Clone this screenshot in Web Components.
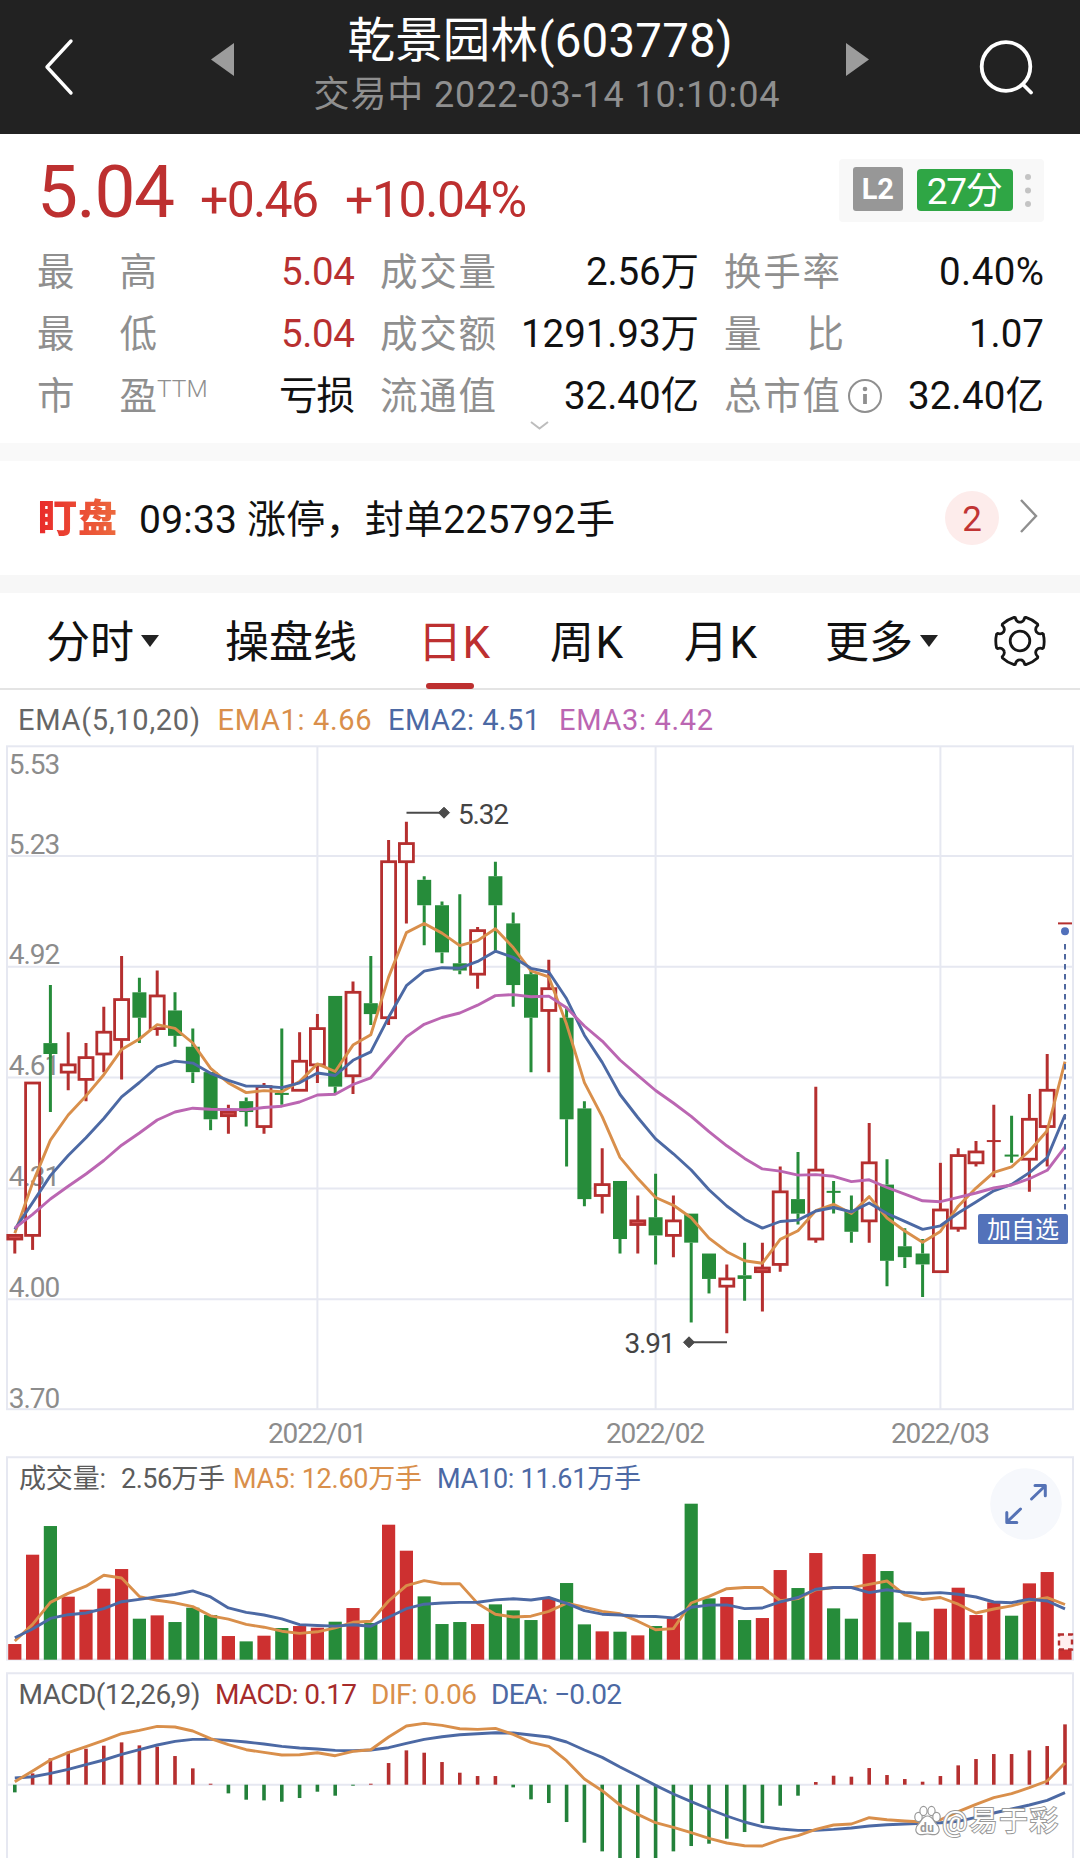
<!DOCTYPE html>
<html lang="zh-CN">
<head>
<meta charset="utf-8">
<title>乾景园林(603778)</title>
<style>
  body {
    margin: 0;
    width: 1080px;
    height: 1858px;
    overflow: hidden;
    background: #fff;
    color: #111;
    font-family: Roboto, "Noto Sans CJK SC", sans-serif;
  }
</style>
</head>
<body>
<stock-page></stock-page>

<script>
const RED = "#b52f2f";
const GREEN = "#268c3a";
const ORANGE = "#d98f4b";
const BLUE = "#4c69a4";
const PINK = "#bb66b2";
const GRID = "#e6e8f1";

// x centre of the i-th trading day
const dayX = i => 14.8 + i * 17.8;

// Text that spreads its letters over a given width
class FitText extends HTMLElement {
  constructor() {
    super();
    this.attachShadow({ mode: "open" });
    this.shadowRoot.innerHTML = `
      <style>
        :host { display: block; white-space: nowrap; flex: none; }
        span { display: inline-block; }
      </style>
      <span><slot></slot></span>
    `;
  }

  connectedCallback() {
    const span = this.shadowRoot.querySelector("span");
    const w = Number(this.getAttribute("w"));
    const chars = [...this.textContent].length;
    const gap = (w - span.getBoundingClientRect().width) / Math.max(chars - 1, 1);
    span.style.letterSpacing = `${gap}px`;
    this.style.width = `${w}px`;
  }
}

class StockHeader extends HTMLElement {
  constructor() {
    super();
    this.attachShadow({ mode: "open" });
    this.shadowRoot.innerHTML = `
      <style>
        :host { display: flex; align-items: center; height: 134px; background: #222; color: #fff; }
        svg { display: block; flex: none; }
        .back { margin-left: 43px; }
        .prev { margin: 0 0 16px 137px; }
        .next { margin: 0 0 16px; }
        .search { margin-left: 110px; }
        .names { width: 612px; display: flex; flex-direction: column; align-items: center; gap: 4px; padding-bottom: 4px; }
        .title { font-size: 47.5px; line-height: 56px; }
        .time { font-size: 36px; line-height: 44px; color: #8f8f8f; margin-left: 13px; }
      </style>
      <svg class="back" width="31" height="58"><path d="M28 3 4 29l24 26" fill="none" stroke="#fff" stroke-width="3.4" stroke-linecap="round" stroke-linejoin="round"/></svg>
      <svg class="prev" width="23" height="33"><path d="M23 0v33L0 16.500z" fill="#9c9c9c"/></svg>
      <div class="names">
        <fit-text class="title" w="385">乾景园林(603778)</fit-text>
        <fit-text class="time" w="466">交易中 2022-03-14 10:10:04</fit-text>
      </div>
      <svg class="next" width="23" height="33"><path d="M0 0v33l23-16.500z" fill="#9c9c9c"/></svg>
      <svg class="search" width="56" height="56"><g fill="none" stroke="#fff" stroke-width="3.8" stroke-linecap="round"><circle cx="27" cy="27.500" r="24.300"/><path d="m44 45.500 8 8"/></g></svg>
    `;
  }
}

class StatCell extends HTMLElement {
  constructor() {
    super();
    this.attachShadow({ mode: "open" });
  }

  connectedCallback() {
    const label = this.getAttribute("label");
    const tone = this.getAttribute("tone");
    const short = label.length === 2;
    this.shadowRoot.innerHTML = `
      <style>
        :host { display: flex; height: 62px; line-height: 60px; font-size: 38.500px; }
        .label { display: flex; justify-content: space-between; color: #8f8f8f; font-size: 37.500px; }
        .value { margin-left: auto; color: ${tone === "up" ? "#b83030" : "#111"}; }
        ::slotted(svg) { margin: 12px 0 0 7px; }
        ::slotted(sup) { font-size: 24.500px; line-height: 46px; color: #8f8f8f; font-weight: 300; vertical-align: baseline; }
      </style>
      <span class="label" style="width:${short ? 120 : 116}px">${[...label].map(c => `<span>${c}</span>`).join("")}</span>
      <slot></slot>
      <fit-text class="value" w="${this.getAttribute("w")}">${this.getAttribute("value")}</fit-text>
    `;
  }
}

class QuotePanel extends HTMLElement {
  constructor() {
    super();
    this.attachShadow({ mode: "open" });
    this.shadowRoot.innerHTML = `
      <style>
        :host { display: block; position: relative; height: 309px; box-sizing: border-box; padding: 22px 36px 0 37px; }
        .top { display: flex; align-items: baseline; height: 85.500px; color: #bd3030; }
        .price { font-size: 73px; line-height: 73px; margin-left: 0; }
        .diff { font-size: 50px; margin-left: 25px; }
        .pct { font-size: 50px; margin-left: 26px; }
        .tools {
          align-self: flex-start;
          margin: 3px 0 0 auto;
          width: 205px;
          height: 63px;
          box-sizing: border-box;
          padding: 8px 12px 0 14px;
          display: flex;
          background: #f8f8f8;
          border-radius: 4px;
          color: #fff;
        }
        .l2 { width: 50px; height: 44px; line-height: 45px; background: #979797; border-radius: 3px; font-size: 29px; font-weight: 700; text-align: center; }
        .score { display: flex; justify-content: center; width: 97px; height: 42px; line-height: 45px; margin: 2px 0 0 14px; background: #2fa645; border-radius: 4px; font-size: 37px; }
        .tools svg { margin: 5px 0 0 11px; }
        .grid { display: grid; grid-template-columns: 318px 319px 320px; column-gap: 25px; }
        .more { position: absolute; left: 529px; top: 286px; }
      </style>
      <div class="top">
        <fit-text class="price" w="138">5.04</fit-text>
        <fit-text class="diff" w="119">+0.46</fit-text>
        <fit-text class="pct" w="182">+10.04%</fit-text>
        <div class="tools">
          <div class="l2">L2</div>
          <div class="score"><fit-text w="76">27分</fit-text></div>
          <svg width="8" height="38" fill="#c4c4c4"><circle cx="4" cy="5" r="3"/><circle cx="4" cy="18.500" r="3"/><circle cx="4" cy="32" r="3"/></svg>
        </div>
      </div>
      <div class="grid">
        <stat-cell label="最高" value="5.04" tone="up" w="74"></stat-cell>
        <stat-cell label="成交量" value="2.56万" w="113"></stat-cell>
        <stat-cell label="换手率" value="0.40%" w="105"></stat-cell>
        <stat-cell label="最低" value="5.04" tone="up" w="74"></stat-cell>
        <stat-cell label="成交额" value="1291.93万" w="178"></stat-cell>
        <stat-cell label="量比" value="1.07" w="75"></stat-cell>
        <stat-cell label="市盈" value="亏损" w="76"><sup>TTM</sup></stat-cell>
        <stat-cell label="流通值" value="32.40亿" w="135"></stat-cell>
        <stat-cell label="总市值" value="32.40亿" w="136">
          <svg width="36" height="36"><circle cx="18" cy="18" r="16" fill="none" stroke="#8f8f8f" stroke-width="2"/><circle cx="18" cy="11" r="2.300" fill="#8f8f8f"/><path d="M18 16v10" stroke="#8f8f8f" stroke-width="3.800"/></svg>
        </stat-cell>
      </div>
      <svg class="more" width="21" height="11"><path d="m2 2 8.500 6.500L19 2" fill="none" stroke="#bdbdbd" stroke-width="2"/></svg>
    `;
  }
}

class AlertBar extends HTMLElement {
  constructor() {
    super();
    this.attachShadow({ mode: "open" });
    this.shadowRoot.innerHTML = `
      <style>
        :host { display: flex; align-items: center; height: 114px; border-top: 18px solid #f9f9f9; border-bottom: 18px solid #f7f7f7; line-height: 114px; }
        .logo { margin: 2px 0 0 38px; font-size: 39px; font-weight: 900; background: linear-gradient(90deg, #e92a2a, #ec6a3e); -webkit-background-clip: text; background-clip: text; color: transparent; }
        .text { margin: 4px 0 0 22px; font-size: 39px; }
        .count { margin-left: auto; width: 54px; height: 54px; line-height: 58px; border-radius: 50%; background: #fdeceb; color: #c13434; font-size: 35px; text-align: center; }
        svg { margin: 0 41px 5px 20px; }
      </style>
      <fit-text class="logo" w="79">盯盘</fit-text>
      <fit-text class="text" w="476">09:33 涨停，封单225792手</fit-text>
      <span class="count">2</span>
      <svg width="20" height="36"><path d="m2 2 15 16L2 34" fill="none" stroke="#8f8f8f" stroke-width="2.400"/></svg>
    `;
  }
}

class PeriodTabs extends HTMLElement {
  constructor() {
    super();
    this.attachShadow({ mode: "open" });
    // gear outline: six wide teeth with round notches between
    const at = (deg, r) => {
      const a = deg * Math.PI / 180;
      return `${(r * Math.cos(a)).toFixed(2)} ${(r * Math.sin(a)).toFixed(2)}`;
    };
    let gear = `M${at(-16, 24.2)}`;
    for (let k = 0; k < 6; k++) {
      const d = k * 60;
      gear += `Q${at(d, 25)} ${at(d + 16, 24.4)}L${at(d + 18.5, 23.8)}Q${at(d + 19, 19.8)} ${at(d + 27, 19)}`
        + `Q${at(d + 30, 18.6)} ${at(d + 33, 19)}Q${at(d + 41, 19.8)} ${at(d + 41.5, 23.8)}L${at(d + 44, 24.4)}`;
    }
    this.shadowRoot.innerHTML = `
      <style>
        :host { display: flex; height: 97px; box-sizing: border-box; border-bottom: 2px solid #e4e4e4; font-size: 44px; line-height: 101px; }
        .tab { position: relative; }
        .on { color: #bd3030; }
        .on::after { content: ""; position: absolute; left: 8px; top: 90px; width: 48px; height: 6px; border-radius: 3px; background: #bd3030; }
        i { align-self: flex-start; width: 0; height: 0; border: 9px solid transparent; border-top: 12px solid #222; border-bottom: 0; margin: 42px 0 0 7px; }
        svg { margin: 18px 0 0 52px; }
      </style>
      <fit-text class="tab" w="88" style="margin-left:46px">分时</fit-text><i></i>
      <fit-text class="tab" w="132" style="margin-left:66px">操盘线</fit-text>
      <fit-text class="tab on" w="72" style="margin-left:61px">日K</fit-text>
      <fit-text class="tab" w="73" style="margin-left:60px">周K</fit-text>
      <fit-text class="tab" w="73" style="margin-left:61px">月K</fit-text>
      <fit-text class="tab" w="88" style="margin-left:68px">更多</fit-text><i></i>
      <svg width="60" height="60" viewBox="-30 -30 60 60" fill="none" stroke="#161616" stroke-width="2.800" stroke-linejoin="round"><path d="${gear}z"/><circle r="9.800"/></svg>
    `;
  }
}

// open, high, low, close
const candles = [
  [4.17, 4.18, 4.13, 4.18], [4.18, 4.60, 4.14, 4.60], [4.71, 4.87, 4.52, 4.68], [4.63, 4.74, 4.58, 4.65],
  [4.61, 4.71, 4.55, 4.67], [4.68, 4.81, 4.63, 4.74], [4.72, 4.95, 4.61, 4.83], [4.85, 4.89, 4.71, 4.78],
  [4.75, 4.91, 4.73, 4.84], [4.80, 4.85, 4.70, 4.73], [4.70, 4.75, 4.60, 4.63], [4.63, 4.63, 4.47, 4.50],
  [4.51, 4.54, 4.46, 4.52], [4.55, 4.56, 4.48, 4.52], [4.48, 4.60, 4.46, 4.59], [4.57, 4.75, 4.54, 4.57],
  [4.58, 4.74, 4.58, 4.66], [4.65, 4.79, 4.60, 4.75], [4.84, 4.84, 4.57, 4.59], [4.62, 4.88, 4.57, 4.85],
  [4.82, 4.95, 4.76, 4.79], [4.78, 5.27, 4.76, 5.21], [5.21, 5.32, 5.04, 5.26], [5.16, 5.17, 4.98, 5.09],
  [5.09, 5.10, 4.93, 4.96], [4.93, 5.12, 4.90, 4.91], [4.90, 5.03, 4.86, 5.02], [5.17, 5.21, 4.96, 5.09],
  [5.04, 5.07, 4.81, 4.87], [4.90, 4.91, 4.63, 4.78], [4.80, 4.94, 4.63, 4.86], [4.78, 4.81, 4.37, 4.50],
  [4.53, 4.55, 4.26, 4.28], [4.29, 4.42, 4.24, 4.32], [4.33, 4.33, 4.13, 4.17], [4.21, 4.29, 4.13, 4.22],
  [4.23, 4.35, 4.10, 4.18], [4.18, 4.29, 4.12, 4.22], [4.24, 4.24, 3.94, 4.16], [4.13, 4.13, 4.02, 4.06],
  [4.04, 4.10, 3.91, 4.06], [4.07, 4.16, 4.00, 4.06], [4.08, 4.16, 3.97, 4.09], [4.10, 4.37, 4.08, 4.30],
  [4.28, 4.41, 4.21, 4.24], [4.17, 4.59, 4.16, 4.36], [4.30, 4.33, 4.24, 4.30], [4.25, 4.29, 4.16, 4.19],
  [4.22, 4.49, 4.16, 4.38], [4.32, 4.39, 4.04, 4.11], [4.15, 4.20, 4.09, 4.12], [4.13, 4.17, 4.01, 4.10],
  [4.08, 4.38, 4.08, 4.25], [4.20, 4.42, 4.19, 4.40], [4.38, 4.44, 4.37, 4.41], [4.44, 4.54, 4.34, 4.44],
  [4.40, 4.51, 4.38, 4.40], [4.39, 4.57, 4.30, 4.50], [4.48, 4.68, 4.37, 4.58], [5.04, 5.04, 5.04, 5.04]
];
// flat days take their colour from the previous close
const isUp = i => {
  const [open, , , close] = candles[i];
  if (i > 0 && open === close) return close > candles[i - 1][3];
  return close > open;
};

const polyline = (ys, color) =>
  `<polyline points="${ys.map((y, i) => `${dayX(i).toFixed(1)},${y.toFixed(1)}`).join(" ")}" fill="none" stroke="${color}" stroke-width="2.900" stroke-linejoin="round"/>`;

const label = (x, y, w, color, text, size = 28) =>
  `<text x="${x}" y="${y}" font-size="${size}" fill="${color}" textLength="${w}">${text}</text>`;

class KChart extends HTMLElement {
  constructor() {
    super();
    this.attachShadow({ mode: "open" });
    const priceY = p => 821.8 + (5.32 - p) * 362.8;

    const ema = (n, seed) => {
      const out = [seed];
      for (let i = 1; i < candles.length; i++) {
        out.push(out[i - 1] + (candles[i][3] - out[i - 1]) * 2 / (n + 1));
      }
      return out.map(priceY);
    };

    const body = (i, attrs) => {
      const [open, , , close] = candles[i];
      const top = priceY(Math.max(open, close));
      return `<rect x="${dayX(i) - 7}" y="${top}" width="14" height="${priceY(Math.min(open, close)) - top}" ${attrs}/>`;
    };

    // white insides hide the grid but stay under the price labels
    const insides = candles.map(([open, , , close], i) => {
      if (close <= open) return "";
      return body(i, `fill="${close - open < 0.015 ? "#e06060" : "#fff"}"`);
    }).join("");

    const bars = candles.map(([open, high, low, close], i) => {
      const x = dayX(i);
      const top = priceY(Math.max(open, close));
      const bottom = priceY(Math.min(open, close));
      const color = isUp(i) ? RED : GREEN;
      const wicks = `<path d="M${x} ${priceY(high)}V${top}M${x} ${bottom}V${priceY(low)}" stroke="${color}" stroke-width="3"/>`;
      if (open === close) {
        return wicks + `<path d="M${x - 7} ${top}h14" stroke="${color}" stroke-width="2"/>`;
      }
      return wicks + body(i, isUp(i) ? `fill="none" stroke="${RED}" stroke-width="2.800"` : `fill="${GREEN}"`);
    }).join("");

    const prices = [["5.53", 774.4], ["5.23", 853.6], ["4.92", 963.9], ["4.61", 1074.7], ["4.31", 1186], ["4.00", 1297], ["3.70", 1407.5]];

    this.shadowRoot.innerHTML = `
      <style>
        :host { display: block; }
        .legend { display: flex; padding: 3px 0 0 18px; font-size: 29px; line-height: 52px; }
        .legend fit-text { position: relative; top: 1px; }
        svg { display: block; }
      </style>
      <div class="legend">
        <fit-text w="182" style="color:#666">EMA(5,10,20)</fit-text>
        <fit-text w="154" style="color:${ORANGE};margin-left:17.500px">EMA1: 4.66</fit-text>
        <fit-text w="152" style="color:${BLUE};margin-left:16.500px">EMA2: 4.51</fit-text>
        <fit-text w="154" style="color:${PINK};margin-left:19px">EMA3: 4.42</fit-text>
      </div>
      <svg width="1080" height="708" viewBox="0 745 1080 708">
        <g fill="none" stroke="${GRID}" stroke-width="2">
          <rect x="7" y="746.300" width="1066" height="662.900"/>
          <path d="M7 856h1066M7 966.700h1066M7 1077.600h1066M7 1188.500h1066M7 1299.200h1066M317.400 746v663M655.600 746v663M940.400 746v663"/>
        </g>
        ${insides}
        ${prices.map(([t, y]) => label(8.8, y, 51.5, "#8c8c8c", t)).join("")}
        ${bars}
        ${polyline(ema(5, 4.186), ORANGE)}
        ${polyline(ema(10, 4.197), BLUE)}
        ${polyline(ema(20, 4.200), PINK)}
        <g stroke="#4a4a4a" stroke-width="2" fill="#4a4a4a">
          <path d="M406.500 812.700H440"/><path d="m438.500 812.700 5.500-5.500 5.500 5.500-5.500 5.500z" stroke-width="1"/>
          <path d="M693 1342.300h34"/><path d="m683.500 1342.300 5.500-5.500 5.500 5.500-5.500 5.500z" stroke-width="1"/>
        </g>
        ${label(458, 823.8, 51, "#444", "5.32")}
        ${label(624.5, 1353.3, 51, "#444", "3.91")}
        <circle cx="1065" cy="931.300" r="4" fill="#5170bb"/>
        <path d="M1065 944v266" stroke="#4f689f" stroke-width="2" stroke-dasharray="5.500 4.500"/>
        <rect x="978" y="1214" width="90" height="30" rx="2" fill="#5372ba"/>
        ${label(987, 1238, 72, "#fff", "加自选", 24)}
        ${label(268, 1442.8, 99, "#8c8c8c", "2022/01")}
        ${label(606, 1442.8, 99, "#8c8c8c", "2022/02")}
        ${label(891, 1442.8, 99, "#8c8c8c", "2022/03")}
      </svg>
    `;
  }
}

class VolumeChart extends HTMLElement {
  constructor() {
    super();
    this.attachShadow({ mode: "open" });
    const base = 1659.7;
    const volumes = [
      47, 315, 401, 189, 150, 213, 272, 123, 133, 113, 156, 134, 71, 55, 72, 95, 101, 96, 114, 155,
      110, 405, 327, 190, 107, 113, 107, 166, 148, 119, 184, 230, 106, 85, 84, 73, 101, 124, 468, 184,
      188, 119, 125, 269, 215, 320, 154, 123, 317, 266, 112, 85, 153, 216, 134, 172, 132, 229, 263, 32
    ];
    // the first days have no full window, so their averages are given
    const average = (n, head) => volumes.map((v, i) => {
      const mean = i < head.length ? head[i] : volumes.slice(i - n + 1, i + 1).reduce((a, b) => a + b) / n;
      return base - mean / 3;
    });

    this.shadowRoot.innerHTML = `
      <style>:host, svg { display: block; }</style>
      <svg width="1080" height="217" viewBox="0 1453 1080 217">
        <path d="M7 1659.500V1457.300H1073V1659.500z" fill="none" stroke="${GRID}" stroke-width="2"/>
        ${volumes.map((v, i) => `<rect x="${dayX(i) - 6.6}" y="${base - v / 3}" width="13.200" height="${v / 3}" fill="${isUp(i) ? "#cd3030" : GREEN}"/>`).join("")}
        <rect x="1059" y="1634.500" width="13" height="15" fill="#fff0f0" stroke="#b52f2f" stroke-width="2.400" stroke-dasharray="5 4"/>
        ${polyline(average(5, [56, 106, 172, 199]), ORANGE)}
        ${polyline(average(10, [66, 92, 124, 135, 140, 153, 174, 181, 189]), BLUE)}
        ${label(19, 1488.2, 87, "#5c5c5c", "成交量:", 27)}
        ${label(121, 1488.2, 104, "#5c5c5c", "2.56万手", 27)}
        ${label(233, 1488.2, 189, ORANGE, "MA5: 12.60万手", 27)}
        ${label(437, 1488.2, 204, BLUE, "MA10: 11.61万手", 27)}
        <circle cx="1026" cy="1504" r="35.800" fill="#f6f8fc"/>
        <g fill="none" stroke="#5572b5" stroke-width="3" stroke-linecap="round" stroke-linejoin="round">
          <path d="m1031.500 1499 13.500-13M1035 1485.500h10.300v10.300"/>
          <path d="m1020.500 1509-13.500 13M1006.800 1512.500v10h10"/>
        </g>
      </svg>
    `;
  }
}

class MacdChart extends HTMLElement {
  constructor() {
    super();
    this.attachShadow({ mode: "open" });
    const zero = 1784.7;
    const bars = [
      -23, 34, 79, 99, 108, 117, 127, 118, 114, 86, 49, 3, -26, -45, -47, -51, -40, -21, -33, -3,
      3, 65, 103, 96, 68, 36, 26, 26, -8, -44, -55, -112, -174, -200, -228, -230, -226, -200, -184, -177,
      -162, -142, -115, -63, -33, 8, 27, 24, 50, 29, 17, 9, 26, 58, 77, 92, 92, 103, 116, 181
    ];
    const dif = [
      9, 41, 74, 96, 114, 133, 153, 163, 175, 173, 161, 138, 120, 105, 97, 89, 90, 96, 87, 100,
      105, 143, 176, 184, 178, 168, 166, 169, 151, 127, 115, 72, 17, -18, -61, -89, -114, -128, -144, -161,
      -175, -183, -184, -165, -153, -134, -121, -118, -99, -105, -109, -112, -105, -81, -59, -39, -27, -9, 11, 65
    ];
    const dea = [
      20, 24, 34, 46, 60, 74, 91, 105, 119, 130, 136, 136, 133, 128, 122, 115, 110, 107, 103, 102,
      104, 111, 124, 136, 144, 150, 153, 156, 155, 149, 143, 128, 104, 82, 53, 26, -2, -28, -51, -73,
      -94, -112, -126, -133, -137, -137, -134, -130, -124, -120, -118, -116, -114, -110, -98, -85, -73, -61, -47, -24
    ];
    const toY = v => zero - v / 3;

    this.shadowRoot.innerHTML = `
      <style>:host, svg { display: block; }</style>
      <svg width="1080" height="188" viewBox="0 1670 1080 188">
        <path d="M7 1858V1673.300H1073V1858M7 1784.700h1066" fill="none" stroke="${GRID}" stroke-width="2"/>
        ${bars.map((v, i) => `<path d="M${dayX(i)} ${zero}V${toY(v)}" stroke="${v > 0 ? RED : "#23813a"}" stroke-width="3.600"/>`).join("")}
        ${polyline(dea.map(toY), BLUE)}
        ${polyline(dif.map(toY), ORANGE)}
        ${label(18.5, 1704.3, 182, "#5c5c5c", "MACD(12,26,9)")}
        ${label(215, 1704.3, 142, "#a62b2b", "MACD: 0.17")}
        ${label(371, 1704.3, 106, ORANGE, "DIF: 0.06")}
        ${label(491, 1704.3, 131, BLUE, "DEA: −0.02")}
        <g fill="#fff" stroke="#999" stroke-width="1.200">
          <ellipse cx="918.500" cy="1817" rx="3.700" ry="4.700"/>
          <ellipse cx="923.500" cy="1811" rx="3.600" ry="4.600"/>
          <ellipse cx="931.500" cy="1811" rx="3.600" ry="4.600"/>
          <ellipse cx="936.500" cy="1817" rx="3.700" ry="4.700"/>
          <path d="M927.500 1816c-5 0-6 5-9 8-3.500 3-4 9 1 10.500 3 .8 5-.5 8-.5s5 1.300 8 .5c5-1.500 4.500-7.500 1-10.500-3-3-4-8-9-8z"/>
        </g>
        <text x="920" y="1832" font-size="12" font-weight="700" fill="#999" textLength="14">du</text>
        <text x="942" y="1830.500" font-size="28.500" fill="#fff" stroke="#999" stroke-width="2" paint-order="stroke" textLength="116">@易于彩</text>
      </svg>
    `;
  }
}

class StockPage extends HTMLElement {
  constructor() {
    super();
    this.attachShadow({ mode: "open" });
    this.shadowRoot.innerHTML = `
      <style>:host { display: flex; flex-direction: column; }</style>
      <stock-header></stock-header>
      <quote-panel></quote-panel>
      <alert-bar></alert-bar>
      <period-tabs></period-tabs>
      <k-chart></k-chart>
      <volume-chart></volume-chart>
      <macd-chart></macd-chart>
    `;
  }
}

customElements.define("fit-text", FitText);
customElements.define("stat-cell", StatCell);
customElements.define("stock-header", StockHeader);
customElements.define("quote-panel", QuotePanel);
customElements.define("alert-bar", AlertBar);
customElements.define("period-tabs", PeriodTabs);
customElements.define("k-chart", KChart);
customElements.define("volume-chart", VolumeChart);
customElements.define("macd-chart", MacdChart);
customElements.define("stock-page", StockPage);
</script>
</body>
</html>
